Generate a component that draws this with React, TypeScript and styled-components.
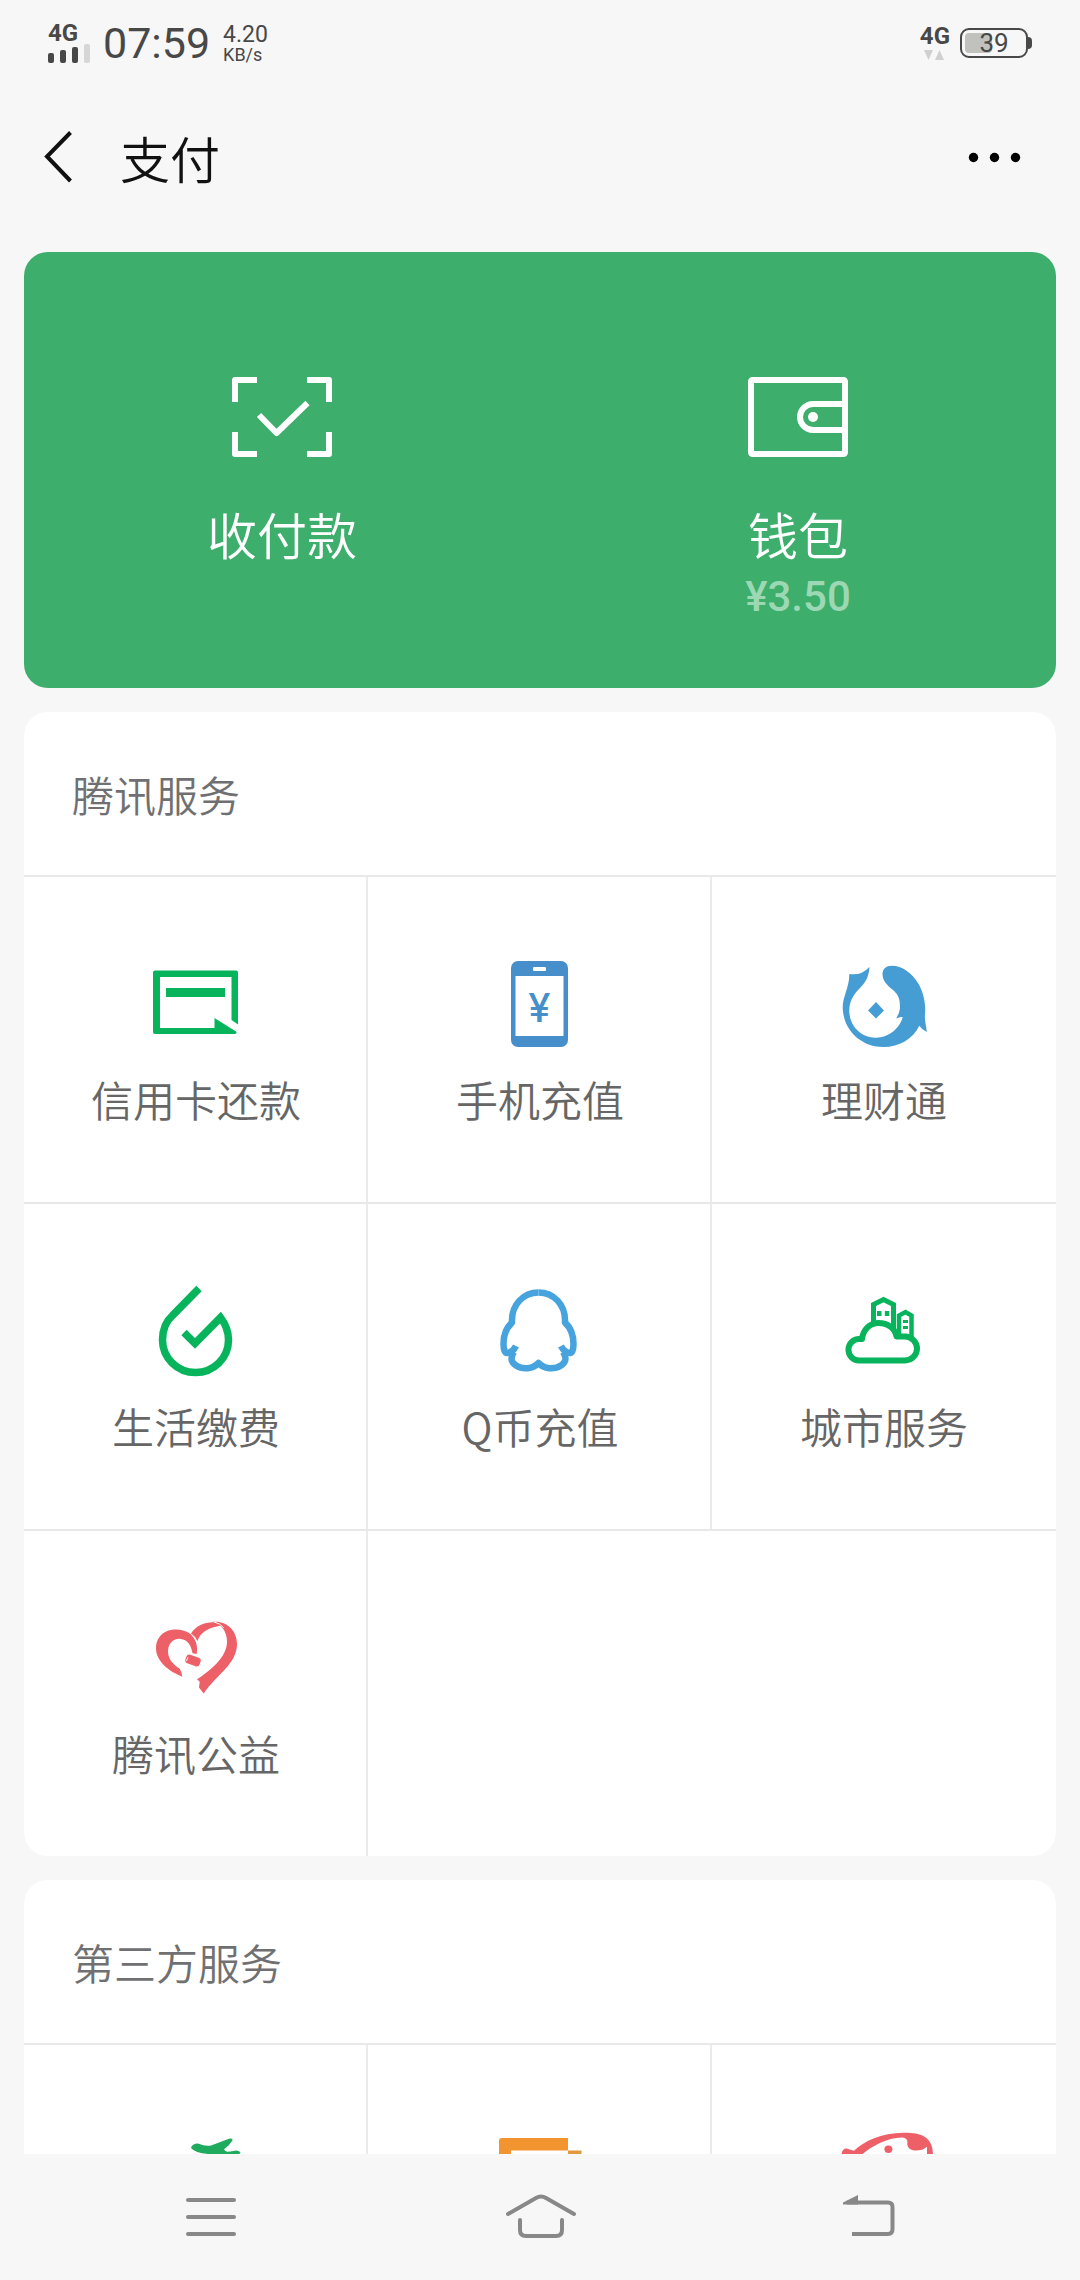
import React from "react";
import styled, { createGlobalStyle } from "styled-components";

const GlobalStyle = createGlobalStyle`
  * { box-sizing: border-box; }
  body {
    margin: 0;
    background: #f7f7f7;
    font-family: "Noto Sans CJK SC", Roboto, sans-serif;
    font-weight: 350;
  }
  button {
    margin: 0;
    padding: 0;
    border: 0;
    background: none;
    font: inherit;
    color: inherit;
    cursor: pointer;
  }
  svg { display: block; overflow: visible; }
`;

const Screen = styled.div`
  display: flex;
  flex-direction: column;
  height: 100vh;
`;

const StatusBar = styled.div`
  display: flex;
  align-items: center;
  justify-content: space-between;
  flex: none;
  height: 86px;
  padding: 0 52px 0 48px;
  font-family: Roboto, sans-serif;
  font-weight: 400;
  color: #484848;
`;

const StatusGroup = styled.div<{ $gap: number }>`
  display: flex;
  align-items: center;
  gap: ${(p) => p.$gap}px;
`;

const Network = styled.div`
  display: flex;
  flex-direction: column;
  gap: 2px;
`;

const NetworkName = styled.span`
  font-size: 24px;
  line-height: 18px;
  font-weight: 700;
`;

const Clock = styled.time`
  font-size: 43px;
  line-height: 48px;
`;

const Speed = styled.div`
  display: flex;
  flex-direction: column;
  font-size: 23px;
  line-height: 24px;
`;

const SpeedUnit = styled.span`
  font-size: 18px;
  line-height: 16px;
`;

const Battery = styled.div`
  position: relative;
  width: 68px;
  height: 30px;
  padding: 3px;
  border: 2px solid #484848;
  border-radius: 9px;

  &::after {
    content: "";
    position: absolute;
    top: 7px;
    right: -6px;
    width: 4px;
    height: 12px;
    border-radius: 0 4px 4px 0;
    background: #484848;
  }
`;

const BatteryFill = styled.div`
  height: 100%;
  border-radius: 4px;
  background: #c1c1be;
`;

const BatteryLevel = styled.span`
  position: absolute;
  inset: 0;
  text-align: center;
  font-size: 26px;
  line-height: 26px;
`;

const Header = styled.header`
  display: flex;
  align-items: center;
  flex: none;
  height: 142px;
  padding: 0 60px 0 44px;
  color: #111;
`;

const Title = styled.h1`
  flex: 1;
  margin: 0 0 0 48px;
  font-size: 50px;
  line-height: 60px;
  font-weight: 350;
`;

const Content = styled.main`
  display: flex;
  flex-direction: column;
  flex: 1;
  gap: 24px;
  min-height: 0;
  padding: 24px 24px 0;
  overflow-y: auto;
  scrollbar-width: none;
`;

const WalletCard = styled.section`
  display: grid;
  grid-template-columns: repeat(2, 1fr);
  flex: none;
  min-height: 436px;
  border-radius: 24px;
  background: #3dae6b;
  color: #fff;
`;

const WalletAction = styled.button`
  display: flex;
  flex-direction: column;
  align-items: center;
  padding-top: 125px;
`;

const WalletLabel = styled.span`
  margin-top: 46px;
  font-size: 50px;
  line-height: 60px;
`;

const Balance = styled.span`
  font-family: Roboto, sans-serif;
  font-size: 42px;
  line-height: 68px;
  font-weight: 500;
  color: #9dd8b4;
`;

const ServiceCard = styled.section`
  flex: none;
  border-radius: 24px;
  background: #fff;
  overflow: hidden;
`;

const ServiceTitle = styled.h2`
  margin: 0;
  padding: 0 48px;
  font-size: 42px;
  line-height: 163px;
  font-weight: 350;
  color: #707072;
`;

const ServiceRow = styled.div`
  display: grid;
  grid-template-columns: repeat(3, 1fr);
  border-top: 2px solid #e8e8e8;
`;

const ServiceItem = styled.button`
  display: flex;
  flex-direction: column;
  align-items: center;
  gap: 16px;
  min-height: 325px;
  padding-top: 80px;
  font-size: 42px;
  line-height: 60px;
  color: #666;

  &:not(:nth-child(3)) {
    box-shadow: inset -2px 0 #ebebeb;
  }
`;

const NavBar = styled.nav`
  display: grid;
  grid-template-columns: repeat(3, 1fr);
  flex: none;
  height: 126px;
  padding: 0 46px;
  background: #f7f7f7;
`;

const NavButton = styled.button`
  display: flex;
  align-items: center;
  justify-content: center;
`;

const GREEN = "#07b45c";
const BLUE = "#468fcb";
const SKY = "#469dd3";
const RED = "#ee6068";

function Icon({ children }: { children: React.ReactNode }) {
  return (
    <svg width="96" height="96" viewBox="0 0 96 96" fill="none" aria-hidden="true">
      {children}
    </svg>
  );
}

const CardIcon = (
  <Icon>
    <path
      fill={GREEN}
      d="M7 13.500H88a2 2 0 0 1 2 2V67.500L83.500 63V20H12V71H66.500V61L88 74.500Q89.500 76.500 87 77H7Q5 77 5 75V15.500Q5 13.500 7 13.500Z"
    />
    <rect x="18" y="31" width="59" height="9" fill={GREEN} />
  </Icon>
);

const PhoneIcon = (
  <Icon>
    <rect x="19" y="4" width="57" height="86" rx="7" fill={BLUE} />
    <rect x="23.500" y="19" width="48" height="60" fill="#fff" />
    <rect x="41" y="10" width="13" height="4" rx="1" fill="#fff" />
    <text
      x="47.500"
      y="65"
      textAnchor="middle"
      fontFamily="Inter, sans-serif"
      fontSize="40"
      fontWeight="500"
      fill={BLUE}
    >
      ¥
    </text>
  </Icon>
);

const WealthIcon = (
  <Icon>
    <path
      fill={SKY}
      d="M13.300 17Q25 19 33.500 10C33 20 29 26 24 31C17 38 13 45 13.300 55C14 70 26 81 40 80.700C53 80.500 64 71 66.700 60Q64 59.500 60 61.500Q63.500 57 64 51C64 43 63 38 57 33C51 28 46.500 24 46.500 17C46.500 12 50 8.700 56 8.700C66 8.700 76 16 82.300 26.500C87 35 90 45 89 57C88.500 63 90 68 90.900 75Q86 73 83.300 68.700C77 82 63 90 47.500 90C24 90 6.700 72 6.700 50C6.700 40 13.500 30 13.300 17Z"
    />
    <path fill={SKY} d="M40 45L48 53.500L40 61.500L32 53.500Z" />
  </Icon>
);

const UtilityIcon = (
  <Icon>
    <path
      stroke={GREEN}
      strokeWidth="7.5"
      d="M51 4.500L24.500 31.500C17 38 14.500 46 14.500 56A33 32.500 0 1 0 80.500 56C80.500 47 77.500 40 72.500 33.500L47 59.500L36 48.500"
    />
  </Icon>
);

const PenguinIcon = (
  <Icon>
    <g stroke="#46a3de" strokeWidth="6.500" strokeLinejoin="round">
      <path d="M46.500 8.500C31 8.500 20 21 20 36V38.500C14 44 11.500 52 11.500 60C11.500 66 13 69.500 15.500 69C18.500 68.500 22 66 24 62" />
      <path d="M46.500 8.500C62 8.500 73 21 73 36V38.500C79 44 81.500 52 81.500 60C81.500 66 80 69.500 77.500 69C74.500 68.500 71 66 69 62" />
      <path d="M22 68C18 74 19 78 24 81.500C31 86 41 85 46.500 79C52 85 62 86 69 81.500C74 78 75 74 71 68" />
    </g>
  </Icon>
);

const CityIcon = (
  <Icon>
    <g stroke={GREEN} strokeWidth="6">
      <path
        strokeLinejoin="round"
        d="M23 76.500H69A12 12 0 0 0 69 52.500H60.500C59 44 51.500 39 42.500 39C33.500 39 27 46 26 55H23A10.500 10.700 0 0 0 23 76.500Z"
      />
      <path strokeWidth="5" d="M37.500 42V20.500L47.500 15.500L57.500 20.500V45" />
      <path strokeWidth="4.500" d="M63 53V31.500L69.500 28L75.500 31.500V53" />
    </g>
    <g fill={GREEN}>
      <rect x="41" y="27" width="4.500" height="5" />
      <rect x="48.800" y="27" width="4.500" height="5" />
      <rect x="67" y="36" width="5" height="3" />
      <rect x="67" y="42" width="5" height="3" />
    </g>
  </Icon>
);

const CharityIcon = (
  <Icon>
    <g fill={RED}>
      <path d="M42 22.500C36 18.500 30 18 24 18.700C14 20 7.500 28 8 38C8.500 50 20 60 34.300 65.700Q34 61 31.500 57.500C24 53 20 47 20 40C20.500 31 27 27 33 28C39 29 43 33 44.500 42.300L48.700 43C50 35 48 28 42 22.500Z" />
      <path d="M43 22.500C49 13 59 10 71 11.500L76 16Q72 14 69 15.500C60 17 52 22 49.500 30Q47 25 43 22.500Z" />
      <path d="M64 11C78 9 89 19 89 33C89 53 69 63 55.700 82.500L51 76.500L51.700 70.700L49 68.300C62 60 79 46 79 31C79 21 74 13 64 11Z" />
      <rect x="37.500" y="45" width="15" height="9" rx="3" transform="rotate(20 45 49.500)" />
    </g>
    <path stroke="#fff" strokeWidth="1" d="M66 11Q72 12 76 17M40 46L38.500 50" />
  </Icon>
);

const PlaneIcon = (
  <Icon>
    <path
      fill="#1fab5e"
      d="M43 23Q44 18.500 50 18.500Q57 21.500 63 20.500L79 14.500Q84 12.500 84.700 15Q82 20 76 24.300Q77 27 80 26.700Q84 26.500 87.700 25.500Q92 25.500 92.500 28Q88 31 86 40H76L60 29Q47 28 43 23Z"
    />
  </Icon>
);

const TaxiIcon = (
  <Icon>
    <path fill="#f29430" d="M10 13H76V25.500H19V60H7V16Q7 13 10 13Z" />
    <path fill="#e0993c" d="M76 25.500H89.500V40H76Z" />
  </Icon>
);

const FishIcon = (
  <Icon>
    <path
      fill={RED}
      d="M5.500 30Q6 23 11 23.500Q14 25 18 25.700C28 16 46 7.500 68 7.700C84 7.500 97 11 97 30V40H91V21.700Q86 26 78.500 25.500Q70 24 71.500 17Q71 12.500 66 12.500C50 13 36 21 25.500 30L16 40H5.500Z"
    />
    <ellipse cx="52.400" cy="24.300" rx="4" ry="3.700" fill={RED} />
  </Icon>
);

type Service = { name: string; icon: React.ReactNode };

const tencentRows: Service[][] = [
  [
    { name: "信用卡还款", icon: CardIcon },
    { name: "手机充值", icon: PhoneIcon },
    { name: "理财通", icon: WealthIcon },
  ],
  [
    { name: "生活缴费", icon: UtilityIcon },
    { name: "Q币充值", icon: PenguinIcon },
    { name: "城市服务", icon: CityIcon },
  ],
  [{ name: "腾讯公益", icon: CharityIcon }],
];

const partnerServices: Service[] = [
  { name: "火车票机票", icon: PlaneIcon },
  { name: "滴滴出行", icon: TaxiIcon },
  { name: "美团外卖", icon: FishIcon },
];

export default function App() {
  return (
    <>
      <GlobalStyle />
      <Screen>
        <StatusBar>
          <StatusGroup $gap={13}>
            <Network>
              <NetworkName>4G</NetworkName>
              <svg width="42" height="19" viewBox="0 0 42 19" fill="#484848" aria-hidden="true">
                <rect x="0" y="9" width="6" height="10" rx="2" />
                <rect x="12" y="6" width="6" height="13" rx="2" />
                <rect x="24" y="3" width="6" height="16" rx="2" />
                <rect x="36" y="0" width="6" height="19" rx="2" fill="#d6d6d6" />
              </svg>
            </Network>
            <Clock>07:59</Clock>
            <Speed>
              <span>4.20</span>
              <SpeedUnit>KB/s</SpeedUnit>
            </Speed>
          </StatusGroup>
          <StatusGroup $gap={10}>
            <Network>
              <NetworkName>4G</NetworkName>
              <svg width="29" height="13" viewBox="0 0 29 13" fill="#d0d0d0" aria-hidden="true">
                <path d="M4 3H13L8.500 13ZM15 13L19.500 3L24 13Z" />
              </svg>
            </Network>
            <Battery>
              <BatteryFill style={{ width: "46%" }} />
              <BatteryLevel>39</BatteryLevel>
            </Battery>
          </StatusGroup>
        </StatusBar>

        <Header>
          <button aria-label="返回">
            <svg width="28" height="52" viewBox="0 0 28 52" fill="none" stroke="#111" strokeWidth="4">
              <path d="M26.500 1.500L3 25.500L26.500 50" />
            </svg>
          </button>
          <Title>支付</Title>
          <button aria-label="更多">
            <svg width="52" height="52" viewBox="0 0 52 52" fill="#000">
              <circle cx="5.500" cy="26.500" r="4.700" />
              <circle cx="26.500" cy="26.500" r="4.700" />
              <circle cx="47.500" cy="26.500" r="4.700" />
            </svg>
          </button>
        </Header>

        <Content>
          <WalletCard>
            <WalletAction>
              <svg
                width="100"
                height="80"
                viewBox="0 0 100 80"
                fill="none"
                stroke="#fff"
                strokeWidth="6"
                strokeLinejoin="round"
                aria-hidden="true"
              >
                <path d="M3 25V3H25M75 3H97V25M97 55V77H75M25 77H3V55" />
                <path d="M27 38L44.500 56L75.500 26" />
              </svg>
              <WalletLabel>收付款</WalletLabel>
            </WalletAction>
            <WalletAction>
              <svg
                width="100"
                height="80"
                viewBox="0 0 100 80"
                fill="none"
                stroke="#fff"
                strokeWidth="6"
                aria-hidden="true"
              >
                <rect x="3" y="3" width="94" height="74" rx="1.500" />
                <path d="M97 27H65A13 13 0 0 0 65 53H97" />
                <circle cx="65" cy="40" r="5" fill="#fff" stroke="none" />
              </svg>
              <WalletLabel>钱包</WalletLabel>
              <Balance>¥3.50</Balance>
            </WalletAction>
          </WalletCard>

          <ServiceCard>
            <ServiceTitle>腾讯服务</ServiceTitle>
            {tencentRows.map((row) => (
              <ServiceRow key={row[0].name}>
                {row.map((s) => (
                  <ServiceItem key={s.name}>
                    {s.icon}
                    {s.name}
                  </ServiceItem>
                ))}
              </ServiceRow>
            ))}
          </ServiceCard>

          <ServiceCard>
            <ServiceTitle>第三方服务</ServiceTitle>
            <ServiceRow>
              {partnerServices.map((s) => (
                <ServiceItem key={s.name} aria-label={s.name}>
                  {s.icon}
                </ServiceItem>
              ))}
            </ServiceRow>
          </ServiceCard>
        </Content>

        <NavBar>
          <NavButton aria-label="菜单">
            <svg width="50" height="44" viewBox="0 0 50 44" stroke="#888" strokeWidth="4" strokeLinecap="round">
              <path d="M2 5H48M2 22H48M2 39H48" />
            </svg>
          </NavButton>
          <NavButton aria-label="主屏幕">
            <svg
              width="70"
              height="44"
              viewBox="0 0 70 44"
              fill="none"
              stroke="#888"
              strokeWidth="4"
              strokeLinecap="round"
            >
              <path d="M3 19L31 3Q36 0 41 3L69 19" />
              <path d="M15 25V35Q15 41 21 41H51Q57 41 57 35V25" />
            </svg>
          </NavButton>
          <NavButton aria-label="后退">
            <svg width="52" height="44" viewBox="0 0 52 44" fill="none" stroke="#888" strokeWidth="4">
              <path d="M4 7.500H45Q49.500 7.500 49.500 12V34Q49.500 39 45 39H9" />
              <path d="M0 7.500L15 0V9.500H0Z" fill="#888" stroke="none" />
            </svg>
          </NavButton>
        </NavBar>
      </Screen>
    </>
  );
}
